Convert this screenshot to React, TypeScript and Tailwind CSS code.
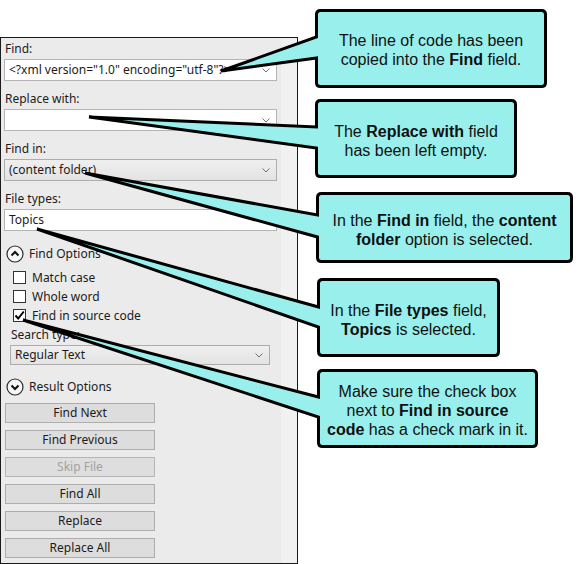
import type { ReactNode } from 'react';

type CalloutShape = {
  box: [number, number, number, number];
  wedge: [number, number];
  tip: [number, number];
};

const shapes: CalloutShape[] = [
  { box: [315, 9, 547, 88], wedge: [37, 58], tip: [221, 71] },
  { box: [315, 99, 517, 178], wedge: [127, 148], tip: [89, 117] },
  { box: [316, 192, 573, 263], wedge: [215, 237], tip: [85, 173] },
  { box: [317, 278, 500, 357], wedge: [307, 327], tip: [37, 229] },
  { box: [317, 369, 538, 448], wedge: [397, 417], tip: [23, 320] },
];

function calloutPath({ box, wedge, tip }: CalloutShape) {
  const x1 = box[0] + 1.5;
  const y1 = box[1] + 1.5;
  const x2 = box[2] - 1.5;
  const y2 = box[3] - 1.5;
  const r = 4;
  return `M${x1 + r} ${y1}H${x2 - r}Q${x2} ${y1} ${x2} ${y1 + r}V${y2 - r}Q${x2} ${y2} ${x2 - r} ${y2}H${x1 + r}Q${x1} ${y2} ${x1} ${y2 - r}V${wedge[1]}L${tip[0]} ${tip[1]}L${x1} ${wedge[0]}V${y1 + r}Q${x1} ${y1} ${x1 + r} ${y1}Z`;
}

function Chevron() {
  return (
    <svg width="8" height="5" viewBox="0 0 8 5" className="shrink-0">
      <polyline points="0.5,0.5 4,4 7.5,0.5" fill="none" stroke="#707070" strokeWidth="1" />
    </svg>
  );
}

function CircleToggle({ up }: { up: boolean }) {
  return (
    <svg width="18" height="18" viewBox="0 0 18 18" className="shrink-0">
      <circle cx="9" cy="9" r="8" fill="#f7f7f7" stroke="#2a2a2a" strokeWidth="1.2" />
      <polyline
        points={up ? '5.5,10.5 9,7 12.5,10.5' : '5.5,7.5 9,11 12.5,7.5'}
        fill="none"
        stroke="#111"
        strokeWidth="2"
      />
    </svg>
  );
}

function Checkbox({ label, checked }: { label: string; checked?: boolean }) {
  return (
    <div className="flex h-[19px] items-center">
      <div className="ml-[9px] flex h-[13px] w-[13px] items-center justify-center border border-[#333] bg-white">
        {checked && (
          <svg width="11" height="11" viewBox="0 0 11 11">
            <polyline points="1.5,5.5 4.2,8.5 9.8,1.5" fill="none" stroke="#000" strokeWidth="2" />
          </svg>
        )}
      </div>
      <span className="ml-[6px]">{label}</span>
    </div>
  );
}

function Field({ label, value, kind, first }: { label: string; value: string; kind: 'input' | 'combo' | 'plain'; first?: boolean }) {
  return (
    <div className={first ? '' : 'mt-[10px]'}>
      <div className="ml-[1px] mb-[2px] h-[16px] leading-[16px]">{label}</div>
      <div
        className={
          kind === 'combo'
            ? 'flex h-[22px] w-[273px] items-center justify-between border border-[#adadad] bg-gradient-to-b from-[#efefef] to-[#e3e3e3] pl-[4px] pr-[6px]'
            : 'flex h-[22px] w-[273px] items-center justify-between border border-[#b4b4b4] bg-white pl-[4px] pr-[6px]'
        }
      >
        <span className="whitespace-nowrap">{value}</span>
        {kind !== 'plain' && <Chevron />}
      </div>
    </div>
  );
}

function Button({ children, disabled }: { children: ReactNode; disabled?: boolean }) {
  return (
    <div
      className={
        disabled
          ? 'flex h-[20px] w-[150px] items-center justify-center border border-[#b5b5b5] bg-[#dedede] text-[#a2a2a2]'
          : 'flex h-[20px] w-[150px] items-center justify-center border border-[#adadad] bg-[#dddddd]'
      }
    >
      {children}
    </div>
  );
}

export default function App() {
  return (
    <div className="relative h-[564px] w-[582px] overflow-hidden bg-white">
      <div className="mt-[37px] flex h-[527px] w-[298px] border border-[#1a1a1a] font-['Noto_Sans',sans-serif] text-[12px] text-[#1b1b1b]">
        <div className="flex w-[280px] flex-col bg-[#ebebeb] pl-[3px] pt-[3px]">
          <Field first label="Find:" value={'<?xml version="1.0" encoding="utf-8"?>'} kind="input" />
          <Field label="Replace with:" value="" kind="input" />
          <Field label="Find in:" value="(content folder)" kind="combo" />
          <Field label="File types:" value="Topics" kind="plain" />

          <div className="mt-[14px] ml-[2px] flex h-[17px] items-center gap-[5px]">
            <CircleToggle up />
            <span>Find Options</span>
          </div>
          <div className="mt-[6px] flex flex-col">
            <Checkbox label="Match case" />
            <Checkbox label="Whole word" />
            <Checkbox label="Find in source code" checked />
          </div>
          <div className="mt-[2px] ml-[7px] h-[16px] leading-[16px]">Search type:</div>
          <div className="mt-[2px] ml-[6px] flex h-[20px] w-[260px] items-center justify-between border border-[#adadad] bg-gradient-to-b from-[#efefef] to-[#e3e3e3] pl-[4px] pr-[6px]">
            <span>Regular Text</span>
            <Chevron />
          </div>

          <div className="mt-[13px] ml-[2px] flex h-[17px] items-center gap-[5px]">
            <CircleToggle up={false} />
            <span>Result Options</span>
          </div>

          <div className="mt-[8px] ml-[1px] flex flex-col gap-[7px]">
            <Button>Find Next</Button>
            <Button>Find Previous</Button>
            <Button disabled>Skip File</Button>
            <Button>Find All</Button>
            <Button>Replace</Button>
            <Button>Replace All</Button>
          </div>
        </div>
        <div className="flex-1 bg-[#f1f1f1]" />
      </div>

      <svg className="pointer-events-none absolute left-0 top-0" width="582" height="564" viewBox="0 0 582 564">
        {shapes.map((s, i) => (
          <path key={i} d={calloutPath(s)} fill="#98efeb" stroke="#000" strokeWidth="3" />
        ))}
      </svg>

      <div className="font-['Liberation_Sans',Arial,sans-serif] text-[16px] leading-[19px] text-[#111]">
        <div className="absolute left-[315px] top-[9px] flex h-[79px] w-[232px] items-center justify-center pt-[3px] text-center">
          <p>
            The line of code has been
            <br />
            copied into the <b>Find</b> field.
          </p>
        </div>
        <div className="absolute left-[315px] top-[99px] flex h-[79px] w-[202px] items-center justify-center pt-[5px] text-center">
          <p>
            The <b>Replace with</b> field
            <br />
            has been left empty.
          </p>
        </div>
        <div className="absolute left-[316px] top-[192px] flex h-[71px] w-[257px] items-center justify-center pt-[5px] text-center">
          <p>
            In the <b>Find in</b> field, the <b>content</b>
            <br />
            <b>folder</b> option is selected.
          </p>
        </div>
        <div className="absolute left-[317px] top-[278px] flex h-[79px] w-[183px] items-center justify-center pt-[4px] text-center">
          <p>
            In the <b>File types</b> field,
            <br />
            <b>Topics</b> is selected.
          </p>
        </div>
        <div className="absolute left-[317px] top-[369px] flex h-[79px] w-[221px] items-center justify-center pt-[4px] text-center">
          <p>
            Make sure the check box
            <br />
            next to <b>Find in source</b>
            <br />
            <b>code</b> has a check mark in it.
          </p>
        </div>
      </div>
    </div>
  );
}
